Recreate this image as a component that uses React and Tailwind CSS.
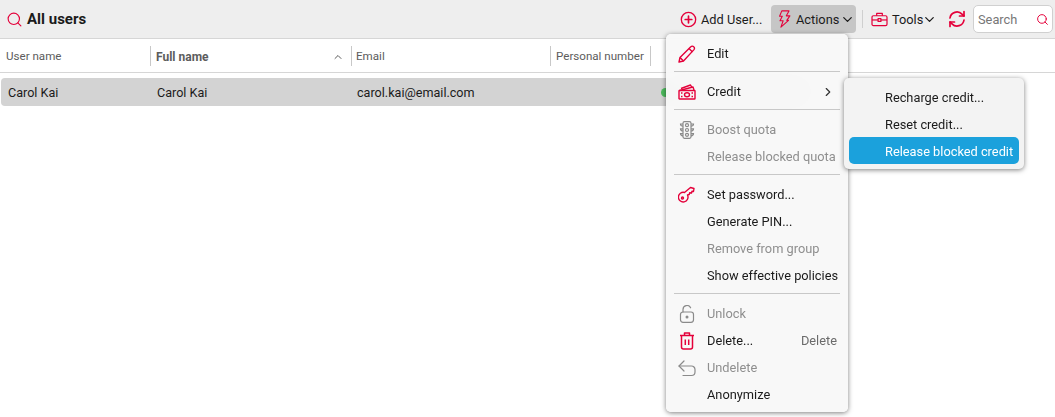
import { ChevronDown, ChevronRight, ChevronUp, Search } from "lucide-react";

const Bolt = ({ className }) => (
  <svg viewBox="0 0 14 20" className={className} fill="none" stroke="currentColor" strokeWidth="1.2" strokeLinejoin="round">
    <path d="M4 1h8l-3 5.500h4L9.500 11.500h2L3 19l2.500-7H2l2.500-5H1.500z" />
  </svg>
);

const Pencil = ({ className }) => (
  <svg viewBox="0 0 18 18" className={className} fill="none" stroke="currentColor" strokeWidth="1.4" strokeLinejoin="round">
    <path d="M1 17l1-4.500L12.800 1.700a2 2 0 0 1 2.900 0 2 2 0 0 1 .3 2.900L5.500 16z" />
    <path d="M2 12.500l3.500 3.500M11 3.500l3.500 3.500" />
  </svg>
);

const Cash = ({ className }) => (
  <svg viewBox="0 0 18 16" className={className} fill="none" stroke="currentColor" strokeWidth="1.4" strokeLinejoin="round">
    <path d="M3 4.500L12.500 1l1.500 2.500" />
    <path d="M1.500 6.500L15 3l1 3" />
    <rect x="1" y="6.500" width="16" height="8.500" rx="0.500" />
    <ellipse cx="9" cy="10.700" rx="2.500" ry="2" />
    <path d="M3 9h1.500M3 12.500h1.500M13.500 9H15M13.500 12.500H15" />
  </svg>
);

const Traffic = ({ className }) => (
  <svg viewBox="0 0 16 18" className={className} fill="none" stroke="currentColor" strokeWidth="1.2">
    <rect x="4" y="0.700" width="8" height="16.600" rx="1.500" />
    <circle cx="8" cy="4.200" r="1.500" />
    <circle cx="8" cy="9" r="1.500" />
    <circle cx="8" cy="13.800" r="1.500" />
    <path d="M4 3H1.500c0 1.500 1 2.200 2.500 2.200M12 3h2.500c0 1.500-1 2.200-2.500 2.200M4 7.800H1.500c0 1.500 1 2.200 2.500 2.200M12 7.800h2.500c0 1.500-1 2.200-2.500 2.200M4 12.600H1.500c0 1.500 1 2.200 2.500 2.200M12 12.600h2.500c0 1.500-1 2.200-2.500 2.200" />
  </svg>
);

const KeyIcon = ({ className }) => (
  <svg viewBox="0 0 18 18" className={className} fill="none" stroke="currentColor" strokeWidth="1.4" strokeLinejoin="round">
    <path d="M6.500 6.500L12.500 1.500l3.500 1-.5 3-1.500-.3-.5 1.800-1.800-.3-.5 1.800-1.700.5A4.800 4.800 0 1 1 6.500 6.500z" />
    <circle cx="4.500" cy="12" r="1" />
  </svg>
);

const Trash = ({ className }) => (
  <svg viewBox="0 0 16 18" className={className} fill="none" stroke="currentColor" strokeWidth="1.5" strokeLinejoin="round">
    <path d="M1 3.500h14M5.500 3.500V1h5v2.500" />
    <path d="M2.500 3.500V15a2 2 0 0 0 2 2h7a2 2 0 0 0 2-2V3.500" />
    <path d="M6.300 7.500v5.500M9.700 7.500v5.500" />
  </svg>
);

const Unlock = ({ className }) => (
  <svg viewBox="0 0 18 18" className={className} fill="none" stroke="currentColor" strokeWidth="1.2" strokeLinejoin="round">
    <rect x="2.500" y="7" width="13" height="10.300" rx="2.500" />
    <path d="M5 7V4.500a4 4 0 0 1 7.600-1.700" strokeLinecap="round" />
    <circle cx="9" cy="12" r="0.900" fill="currentColor" />
  </svg>
);

const Undo = ({ className }) => (
  <svg viewBox="0 0 18 18" className={className} fill="none" stroke="currentColor" strokeWidth="1.2" strokeLinecap="round" strokeLinejoin="round">
    <path d="M6 2L1 7l5 5" />
    <path d="M1 7h12.500a3.500 3.500 0 0 1 3.500 3.500V13a3.500 3.500 0 0 1-3.500 3.500H5" />
  </svg>
);

const Toolbox = ({ className }) => (
  <svg viewBox="0 0 18 16" className={className} fill="none" stroke="currentColor" strokeWidth="1.3" strokeLinejoin="round">
    <path d="M6 4V1.500h6V4" />
    <rect x="1" y="4" width="16" height="10.500" rx="1.500" />
    <path d="M1 8.500h16" />
    <rect x="7.500" y="7" width="3" height="3" fill="#eeeeee" />
  </svg>
);

const Refresh = ({ className }) => (
  <svg viewBox="0 0 18 18" className={className} fill="none" stroke="currentColor" strokeWidth="1.7" strokeLinecap="round" strokeLinejoin="round">
    <path d="M2 8a7 7 0 0 1 12-3.800L16 6" />
    <path d="M16 1.500V6h-4.500" />
    <path d="M16 10a7 7 0 0 1-12 3.800L2 12" />
    <path d="M2 16.500V12h4.500" />
  </svg>
);

const PlusCircle = ({ className }) => (
  <svg viewBox="0 0 18 18" className={className} fill="none" stroke="currentColor" strokeWidth="1.4" strokeLinecap="round">
    <circle cx="9" cy="9" r="7.600" />
    <path d="M9 5.500v7M5.500 9h7" strokeWidth="1.800" />
  </svg>
);

const menuGroups = [
  [{ label: "Edit", icon: Pencil }],
  [{ label: "Credit", icon: Cash, arrow: true }],
  [
    { label: "Boost quota", icon: Traffic, off: true },
    { label: "Release blocked quota", off: true },
  ],
  [
    { label: "Set password...", icon: KeyIcon },
    { label: "Generate PIN..." },
    { label: "Remove from group", off: true },
    { label: "Show effective policies" },
  ],
  [
    { label: "Unlock", icon: Unlock, off: true },
    { label: "Delete...", icon: Trash, hint: "Delete" },
    { label: "Undelete", icon: Undo, off: true },
    { label: "Anonymize" },
  ],
];

function MenuRow({ item }) {
  const Icon = item.icon;
  return (
    <div className={`h-[27px] flex items-center pl-[12px] pr-[11px] ${item.off ? "text-[#8f8f8f]" : "text-[#1b1b1b]"}`}>
      <span className={`w-[29px] shrink-0 flex items-center ${item.off ? "text-[#8a8a8a]" : "text-[#e4003a]"}`}>
        {Icon && <Icon className="w-[18px] h-[18px]" />}
      </span>
      <span className="flex-1 whitespace-nowrap">{item.label}</span>
      {item.hint && <span className="text-[#6b6b6b]">{item.hint}</span>}
      {item.arrow && <ChevronRight className="w-[14px] h-[14px] mr-[2px] text-[#333]" />}
    </div>
  );
}

export default function App() {
  return (
    <div className="relative w-[1055px] h-[417px] overflow-hidden bg-white text-[12.8px] text-[#1b1b1b] font-['Roboto','Noto_Sans',sans-serif]">
      {/* Toolbar */}
      <div className="h-[39px] flex items-center justify-between bg-[#eeeeee] border-b border-[#d6d6d6] pl-[6px] pr-[2px]">
        <div className="flex items-center gap-[4px]">
          <Search className="w-[17px] h-[17px] text-[#e4003a]" strokeWidth={1.6} />
          <span className="text-[15px] font-bold">All users</span>
        </div>
        <div className="flex items-center">
          <div className="w-[91px] flex items-center gap-[4px]">
            <PlusCircle className="w-[17px] h-[17px] text-[#e4003a]" />
            <span className="pt-[2px]">Add User...</span>
          </div>
          <div className="w-[85px] h-[28px] flex items-center pl-[7px] bg-[#c6c6c6] rounded-[4px]">
            <Bolt className="w-[13px] h-[18px] text-[#e4003a]" />
            <span className="w-[42px] ml-[5px] pt-[2px]">Actions</span>
            <ChevronDown className="w-[15px] h-[15px] ml-[2px]" />
          </div>
          <div className="w-px h-[18px] bg-[#cfcfcf] ml-[6px] mr-[8px]"></div>
          <div className="w-[66px] flex items-center">
            <Toolbox className="w-[17px] h-[15px] text-[#e4003a]" />
            <span className="w-[30px] ml-[4px] pt-[2px]">Tools</span>
            <ChevronDown className="w-[15px] h-[15px]" />
          </div>
          <Refresh className="w-[18px] h-[18px] ml-[11px] text-[#e4003a]" />
          <div className="w-[80px] h-[28px] ml-[7px] flex items-center justify-between pl-[4px] pr-[3px] bg-white border border-[#d0d0d0] rounded-[5px]">
            <span className="pt-[2px] text-[#777]">Search</span>
            <Search className="w-[13px] h-[13px] text-[#e4003a]" strokeWidth={1.8} />
          </div>
        </div>
      </div>

      {/* Column headers */}
      <div className="h-[34px] flex items-center border-b border-[#d6d6d6] text-[11.6px] text-[#5c5c5c]">
        <div className="w-[150px] pl-[6px] pt-[3px]">User name</div>
        <div className="w-[201px] h-[20px] flex items-center justify-between border-l border-[#c8c8c8] pl-[5px] pr-[7px] pt-[3px] font-bold">
          <span className="text-[12px]">Full name</span>
          <ChevronUp className="w-[12px] h-[12px]" />
        </div>
        <div className="w-[199px] h-[20px] flex items-center border-l border-[#c8c8c8] pl-[4px] pt-[3px]">Email</div>
        <div className="w-[100px] h-[20px] flex items-center border-l border-[#c8c8c8] pl-[5px] pt-[3px] whitespace-nowrap">Personal number</div>
        <div className="h-[20px] flex items-center border-l border-[#c8c8c8] pl-[17px]">
          <div className="w-[12px] h-[12px] rounded-full border border-[#999]"></div>
        </div>
      </div>

      {/* Selected row */}
      <div className="h-[28px] mt-[5px] ml-px w-[810px] flex items-center bg-[#d3d3d3] rounded-[4px] text-[12.6px]">
        <div className="w-[156px] pl-[7px] pt-[3px]">Carol Kai</div>
        <div className="w-[200px] pt-[3px]">Carol Kai</div>
        <div className="w-[304px] pt-[3px]">carol.kai@email.com</div>
        <div className="w-[9px] h-[9px] rounded-full bg-[#4cbb5c]"></div>
      </div>

      {/* Actions menu */}
      <div className="absolute left-[666px] top-[34px] w-[182px] h-[378px] pt-[6px] bg-[#f8f8f8]/95 backdrop-blur-md rounded-[5px] shadow-[0_1px_5px_rgba(0,0,0,0.5)]">
        {menuGroups.map((group, i) => (
          <div key={i}>
            {i > 0 && <div className="h-px mx-[8px] mt-[4px] mb-[6px] bg-[#c8c8c8]"></div>}
            {group.map((item) => (
              <MenuRow key={item.label} item={item} />
            ))}
          </div>
        ))}
      </div>

      {/* Credit submenu */}
      <div className="absolute left-[844px] top-[78px] w-[180px] h-[91px] p-[5px] bg-[#f3f3f3] rounded-[5px] shadow-[0_1px_5px_rgba(0,0,0,0.5)]">
        <div className="h-[27px] flex items-center pl-[36px] pt-[2px]">Recharge credit...</div>
        <div className="h-[27px] flex items-center pl-[36px] pt-[2px]">Reset credit...</div>
        <div className="h-[27px] flex items-center pl-[36px] pt-[2px] bg-[#1ba1dc] rounded-[5px] text-white whitespace-nowrap">Release blocked credit</div>
      </div>
    </div>
  );
}
